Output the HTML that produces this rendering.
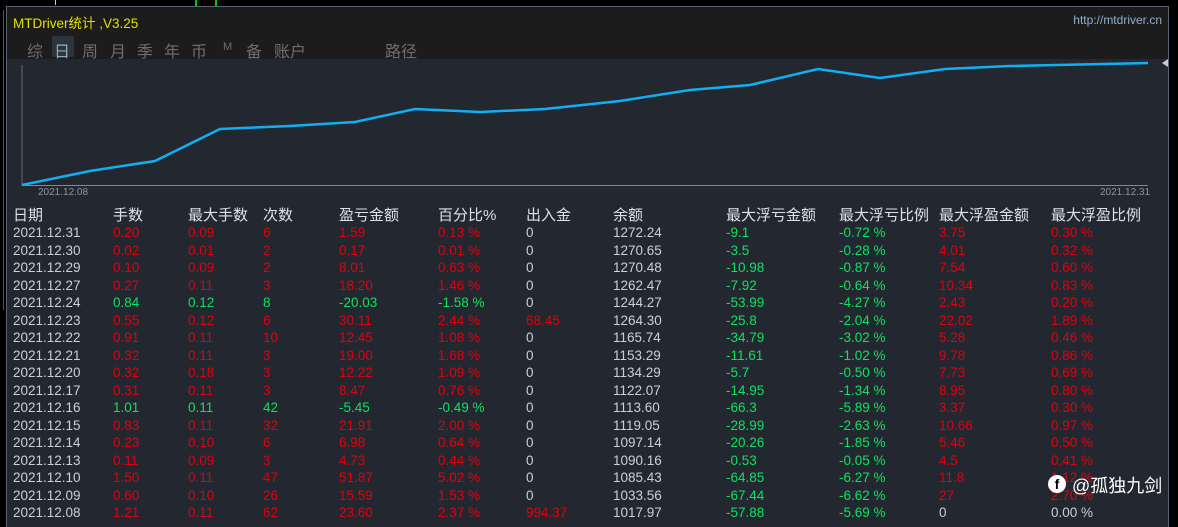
<!DOCTYPE html>
<html><head><meta charset="utf-8"><style>
body{margin:0;width:1178px;height:518px;background:#000;overflow:hidden;font-family:"Liberation Sans","Noto Sans CJK SC",sans-serif;position:relative}
#p{position:absolute;left:6px;top:6px;width:1161px;height:520px;background:#232830;border:1px solid #5a6470;border-bottom:none}
#t{position:absolute;left:0;top:0;width:1161px;height:52px;background:#1c1c1c}
.tt{position:absolute;left:6px;top:5px;color:#e0e000;font-size:13.5px}
.url{position:absolute;right:6px;top:6px;color:#8fb0d0;font-size:12px}
.tabs{position:absolute;top:31px;left:20px;font-size:16px;color:#6e6e6e}
.tabs span{position:absolute;white-space:nowrap}
.r{position:absolute;font-size:13.5px;white-space:nowrap;color:#c8d0da}
.h{font-size:15px;color:#dce2ea}
.R{color:#e00010}.G{color:#10e060}
</style></head><body>
<div style="position:absolute;left:55px;top:0;width:1px;height:5px;background:#ccc"></div>
<div style="position:absolute;left:195px;top:0;width:2px;height:6px;background:#0c0"></div>
<div style="position:absolute;left:215px;top:0;width:2px;height:6px;background:#0c0"></div>
<div style="position:absolute;left:0;top:10px;width:3px;height:300px;border-right:1px solid #555"></div>
<div id="p">
<div id="t"><div class="tt">MTDriver统计 ,V3.25</div><div class="url">http://mtdriver.cn</div>
<div class="tabs">
<span style="top:-2px;width:22px;height:21px;background:#2c3440;left:25px;border-radius:2px"></span>
<span style="left:0">综</span><span style="left:27px;color:#9aa">日</span><span style="left:55px">周</span><span style="left:83px">月</span><span style="left:110px">季</span><span style="left:137px">年</span><span style="left:164px">币</span><span style="left:196px;font-size:11px;top:3px">M</span><span style="left:219px">备</span><span style="left:247px">账户</span><span style="left:358px">路径</span>
</div></div>
<svg style="position:absolute;left:-7px;top:-6px" width="1178" height="518">
<line x1="22" y1="64" x2="22" y2="185" stroke="#666" stroke-width="1"/>
<line x1="22" y1="184.5" x2="1148" y2="184.5" stroke="#888" stroke-width="1"/>
<polyline fill="none" stroke="#10b0f0" stroke-width="2.5" points="22,184 90,170 155,160 220,128 290,125 355,121 415,108 480,111 545,108 620,100 690,89 750,84 818,68 880,77 945,68 1010,65 1148,62"/>
<polygon points="1162,62 1168,58 1168,66" fill="#ccc"/>
</svg>
<div class="r" style="left:31px;top:180px;font-size:10px;color:#8a93a0">2021.12.08</div>
<div class="r" style="left:1093px;top:180px;font-size:10px;color:#8a93a0">2021.12.31</div>
<div id="tb"></div>
</div>
<script>
var cols=[6,106,181,256,332,431,519,606,719,832,932,1044];
var hd=["日期","手数","最大手数","次数","盈亏金额","百分比%","出入金","余额","最大浮亏金额","最大浮亏比例","最大浮盈金额","最大浮盈比例"];
var d=[
["2021.12.31","0.20","0.09","6","1.59","0.13 %","0","1272.24","-9.1","-0.72 %","3.75","0.30 %"],
["2021.12.30","0.02","0.01","2","0.17","0.01 %","0","1270.65","-3.5","-0.28 %","4.01","0.32 %"],
["2021.12.29","0.10","0.09","2","8.01","0.63 %","0","1270.48","-10.98","-0.87 %","7.54","0.60 %"],
["2021.12.27","0.27","0.11","3","18.20","1.46 %","0","1262.47","-7.92","-0.64 %","10.34","0.83 %"],
["2021.12.24","0.84","0.12","8","-20.03","-1.58 %","0","1244.27","-53.99","-4.27 %","2.43","0.20 %"],
["2021.12.23","0.55","0.12","6","30.11","2.44 %","68.45","1264.30","-25.8","-2.04 %","22.02","1.89 %"],
["2021.12.22","0.91","0.11","10","12.45","1.08 %","0","1165.74","-34.79","-3.02 %","5.28","0.46 %"],
["2021.12.21","0.32","0.11","3","19.00","1.68 %","0","1153.29","-11.61","-1.02 %","9.78","0.86 %"],
["2021.12.20","0.32","0.18","3","12.22","1.09 %","0","1134.29","-5.7","-0.50 %","7.73","0.69 %"],
["2021.12.17","0.31","0.11","3","8.47","0.76 %","0","1122.07","-14.95","-1.34 %","8.95","0.80 %"],
["2021.12.16","1.01","0.11","42","-5.45","-0.49 %","0","1113.60","-66.3","-5.89 %","3.37","0.30 %"],
["2021.12.15","0.83","0.11","32","21.91","2.00 %","0","1119.05","-28.99","-2.63 %","10.66","0.97 %"],
["2021.12.14","0.23","0.10","6","6.98","0.64 %","0","1097.14","-20.26","-1.85 %","5.46","0.50 %"],
["2021.12.13","0.11","0.09","3","4.73","0.44 %","0","1090.16","-0.53","-0.05 %","4.5","0.41 %"],
["2021.12.10","1.50","0.11","47","51.87","5.02 %","0","1085.43","-64.85","-6.27 %","11.8","1.12 %"],
["2021.12.09","0.60","0.10","26","15.59","1.53 %","0","1033.56","-67.44","-6.62 %","27","2.70 %"],
["2021.12.08","1.21","0.11","62","23.60","2.37 %","994.37","1017.97","-57.88","-5.69 %","0","0.00 %"]];
var h="";
hd.forEach(function(t,i){h+='<div class="r h" style="left:'+cols[i]+'px;top:197px">'+t+'</div>'});
d.forEach(function(r,j){var y=218+j*17.5;var neg=r[4][0]=="-";
r.forEach(function(t,i){var c="";
if(i>=1&&i<=5)c=neg?"G":"R";
if(i==6&&t!="0")c="R";
if(i==8||i==9)c="G";
if(i>=10)c=t=="0"||t=="0.00 %"?"":"R";
h+='<div class="r '+c+'" style="left:'+cols[i]+'px;top:'+y+'px">'+t+'</div>'})});
document.getElementById("tb").innerHTML=h;
</script>
<div style="position:absolute;left:1048px;top:475px;width:18px;height:18px;border-radius:50%;background:#fff;color:#000;font-weight:bold;font-size:14px;text-align:center;line-height:19px">f</div>
<div style="position:absolute;left:1072px;top:472px;color:#fff;font-size:18px;font-family:'Liberation Sans','Noto Sans CJK SC',sans-serif">@孤独九剑</div>
</body></html>
